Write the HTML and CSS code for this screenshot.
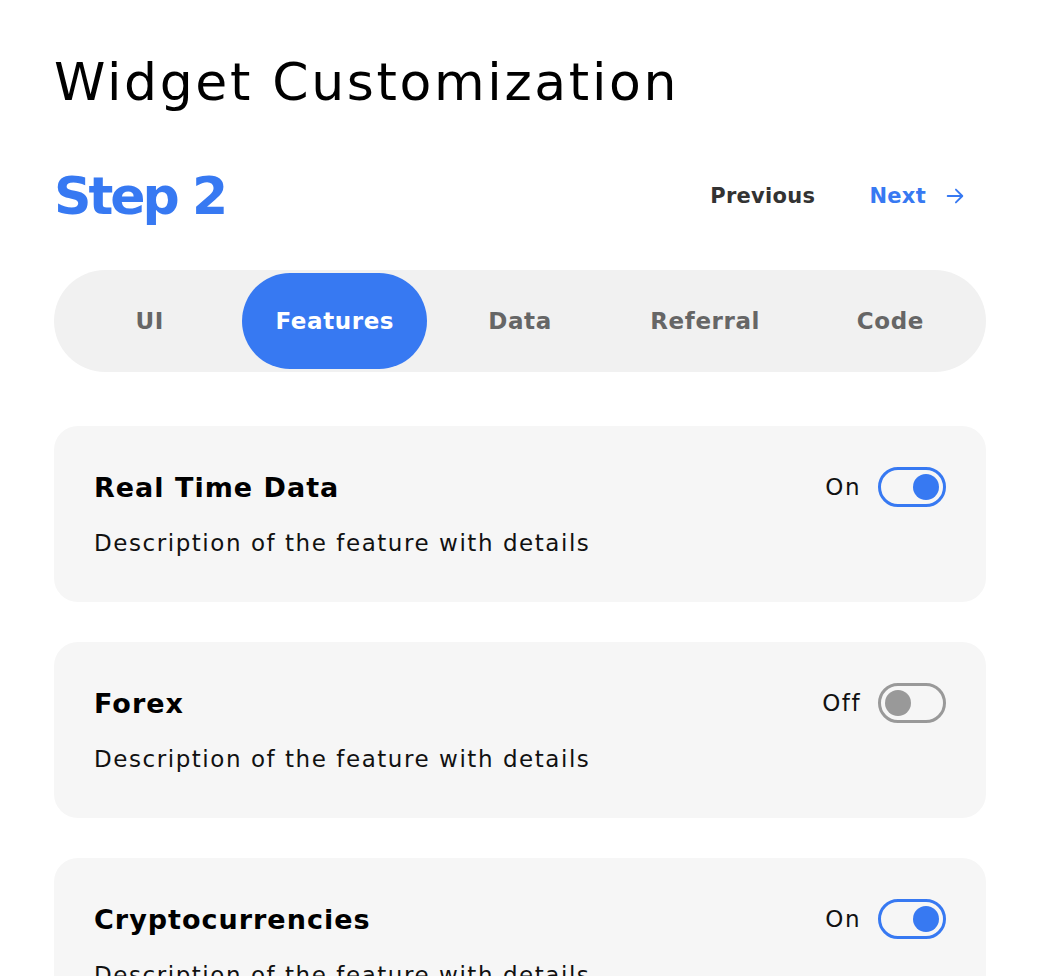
FILE: index.html
```html
<!DOCTYPE html>
<html>
<head>
  <title>Widget Customization</title>
  <link rel="stylesheet" href="styles.css">
</head>
<body>
  <main class="page">
    <h1 class="page-title">Widget Customization</h1>

    <!-- Step header + navigation -->
    <div class="step-row">
      <h2 class="step">Step 2</h2>
      <nav class="step-nav">
        <button class="nav-btn">Previous</button>
        <button class="nav-btn next">Next
          <svg width="22" height="22" viewBox="0 0 24 24" fill="none" stroke="currentColor" stroke-width="2" stroke-linecap="round" stroke-linejoin="round"><path d="M4 12h15"/><path d="M13 5l7 7-7 7"/></svg>
        </button>
      </nav>
    </div>

    <!-- Tabs -->
    <div class="tabs">
      <button class="tab">UI</button>
      <button class="tab active">Features</button>
      <button class="tab">Data</button>
      <button class="tab">Referral</button>
      <button class="tab">Code</button>
    </div>

    <!-- Feature cards -->
    <section class="features">
      <div class="card">
        <div class="card-head">
          <h3 class="card-title">Real Time Data</h3>
          <label class="switch-wrap">On <span class="switch on"><span class="knob"></span></span></label>
        </div>
        <p class="card-desc">Description of the feature with details</p>
      </div>
      <div class="card">
        <div class="card-head">
          <h3 class="card-title">Forex</h3>
          <label class="switch-wrap">Off <span class="switch"><span class="knob"></span></span></label>
        </div>
        <p class="card-desc">Description of the feature with details</p>
      </div>
      <div class="card">
        <div class="card-head">
          <h3 class="card-title">Cryptocurrencies</h3>
          <label class="switch-wrap">On <span class="switch on"><span class="knob"></span></span></label>
        </div>
        <p class="card-desc">Description of the feature with details</p>
      </div>
    </section>
  </main>
</body>
</html>
```

FILE: styles.css
```css
body {
  margin: 0;
  background: #ffffff;
  font-family: 'DejaVu Sans', 'Noto Sans', sans-serif;
  color: #000;
  overflow: hidden;
}
button {
  font-family: inherit;
  border: none;
  background: none;
  cursor: pointer;
  padding: 0;
}
.page { padding: 0 54px; }

.page-title {
  margin: 0;
  padding-top: 52px;
  font-size: 52px;
  font-weight: 400;
  line-height: 60px;
  letter-spacing: 2.65px;
}

/* --- Step header --- */
.step-row {
  display: flex;
  align-items: center;
  justify-content: space-between;
  margin-top: 52px;
  height: 64px;
}
.step {
  margin: 0;
  font-size: 52px;
  font-weight: 700;
  color: #3779f2;
  letter-spacing: -3px;
}
.step-nav { display: flex; align-items: center; gap: 54px; padding-right: 20px; }
.nav-btn {
  font-size: 21px;
  font-weight: 700;
  color: #333;
  display: flex;
  align-items: center;
  gap: 18px;
  letter-spacing: 0.3px;
}
.nav-btn.next { color: #3779f2; }

/* --- Tabs --- */
.tabs {
  display: flex;
  margin-top: 42px;
  padding: 3px;
  background: #f1f1f1;
  border-radius: 51px;
}
.tab {
  flex: 1;
  height: 96px;
  border-radius: 48px;
  font-size: 23px;
  font-weight: 700;
  color: #666;
  letter-spacing: 0.6px;
}
.tab.active { background: #3779f2; color: #fff; }

/* --- Feature cards --- */
.features {
  display: flex;
  flex-direction: column;
  gap: 40px;
  margin-top: 54px;
}
.card {
  background: #f6f6f6;
  border-radius: 24px;
  padding: 41px 40px 43px 40px;
}
.card-head {
  display: flex;
  align-items: center;
  justify-content: space-between;
  height: 40px;
}
.card-title { margin: 0; font-size: 27px; font-weight: 700; letter-spacing: 1px; }
.card-desc {
  margin: 20px 0 0;
  font-size: 23px;
  line-height: 32px;
  color: #111;
  letter-spacing: 1.55px;
}
.switch-wrap {
  display: flex;
  align-items: center;
  gap: 17px;
  font-size: 23px;
  color: #111;
  letter-spacing: 1.5px;
}
.switch {
  box-sizing: border-box;
  width: 68px;
  height: 40px;
  border: 3px solid #999;
  border-radius: 20px;
  display: flex;
  align-items: center;
  justify-content: flex-start;
  padding: 0 4px;
}
.knob { width: 26px; height: 26px; border-radius: 50%; background: #999; }
.switch.on { border-color: #3779f2; justify-content: flex-end; }
.switch.on .knob { background: #3779f2; }
```
